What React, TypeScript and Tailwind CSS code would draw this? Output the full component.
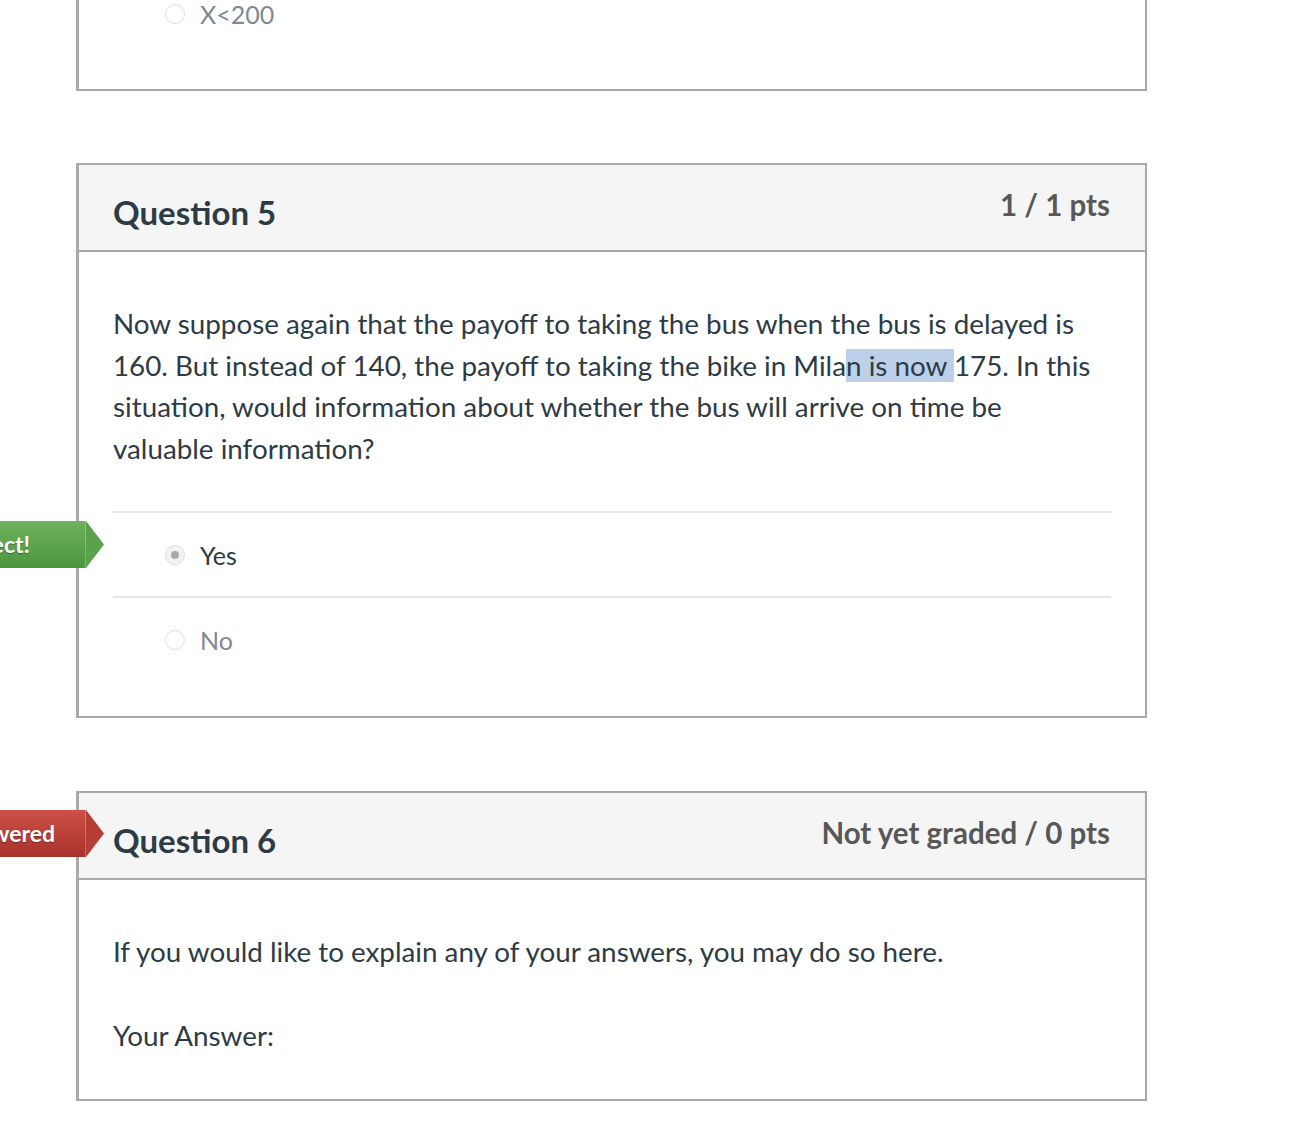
import React from 'react';

// --- small pieces ---
const Radio = ({ checked }: { checked?: boolean }) => (
  <span className={`flex h-[20px] w-[20px] shrink-0 items-center justify-center rounded-full border border-[#dedede] ${checked ? 'bg-[#f3f3f3]' : 'bg-white'}`}>
    {checked && <span className="h-[8px] w-[8px] rounded-full bg-[#a9a9a9]" />}
  </span>
);

const Option = ({ label, checked, muted }: { label: string; checked?: boolean; muted?: boolean }) => (
  <div className="flex items-center gap-[15px] pl-[52px]">
    <Radio checked={checked} />
    <span className={`text-[25px] leading-[30px] ${muted ? 'text-[#7f8891]' : 'text-[#2d3b45]'}`}>{label}</span>
  </div>
);

const Header = ({ title, pts }: { title: string; pts: string }) => (
  <div className="flex h-[87px] items-start justify-between border-b-[2px] border-[#a9a9a9] bg-[#f5f5f5] pl-[34px] pr-[35px]">
    <h2 className="pt-[27px] text-[33px] font-bold leading-[40px] text-[#2d3b45]">{title}</h2>
    <span className="pt-[23px] text-[29.5px] font-bold leading-[34px] text-[#585858]">{pts}</span>
  </div>
);

// the "Correct!" / "Unanswered" arrow that sticks out past the left page edge
const Badge = ({ text, tone, className }: { text: string; tone: 'green' | 'red'; className: string }) => {
  const body = tone === 'green' ? 'from-[#6db25d] to-[#4c963d] pr-[55px]' : 'from-[#cc5048] to-[#a8322a] pr-[30px]';
  const tip = tone === 'green' ? '#5aa34a' : '#b73e35';
  return (
    <div className={`absolute left-0 flex h-[47px] items-stretch ${className}`}>
      <div className={`flex w-[86px] items-center justify-end overflow-hidden border-r border-white/25 bg-gradient-to-b ${body}`}>
        <span className="shrink-0 whitespace-nowrap text-[23px] font-bold text-white [text-shadow:0_1px_1px_rgba(0,0,0,0.35)]">{text}</span>
      </div>
      <svg width="18" height="47" viewBox="0 0 18 47" className="block">
        <polygon points="0,0 18,23.5 0,47" fill={tip} />
      </svg>
    </div>
  );
};

export default function App() {
  return (
    <div className="relative h-[1136px] w-full overflow-hidden bg-white font-['Lato','Noto_Sans',sans-serif] text-[#2d3b45]">
      <div className="ml-[76px] w-[1071px]">
        {/* tail of question 4 */}
        <div className="h-[92px] border-x-[2px] border-b-[2px] border-l-[3px] border-[#a9a9a9] pl-[34px]">
          <div className="-mt-[1px]">
            <Option label="X<200" muted />
          </div>
        </div>

        {/* question 5 */}
        <div className="mt-[72px] border-[2px] border-l-[3px] border-[#a9a9a9]">
          <Header title="Question 5" pts="1 / 1 pts" />
          <div className="px-[34px] pb-[35px] pt-[51px]">
            <p className="mr-[12px] text-[27.8px] leading-[41.6px]">
              Now suppose again that the payoff to taking the bus when the bus is delayed is 160. But instead of 140, the payoff to taking the bike in Mila
              <span className="bg-[#bcd0ea]">n is now </span>
              175. In this situation, would information about whether the bus will arrive on time be valuable information?
            </p>
            <div className="mt-[42px] border-t-[2px] border-[#e6e6e6]">
              <div className="flex h-[83px] items-center">
                <Option label="Yes" checked />
              </div>
              <div className="border-t-[2px] border-[#e6e6e6]" />
              <div className="flex h-[83px] items-center">
                <Option label="No" muted />
              </div>
            </div>
          </div>
        </div>

        {/* question 6 */}
        <div className="mt-[73px] border-[2px] border-l-[3px] border-[#a9a9a9]">
          <Header title="Question 6" pts="Not yet graded / 0 pts" />
          <div className="px-[34px] pb-[42px] pt-[51px]">
            <p className="text-[27.8px] leading-[42px]">If you would like to explain any of your answers, you may do so here.</p>
            <p className="mt-[42px] text-[27.8px] leading-[42px]">Your Answer:</p>
          </div>
        </div>
      </div>

      <Badge text="Correct!" tone="green" className="top-[521px]" />
      <Badge text="Unanswered" tone="red" className="top-[810px]" />
    </div>
  );
}
